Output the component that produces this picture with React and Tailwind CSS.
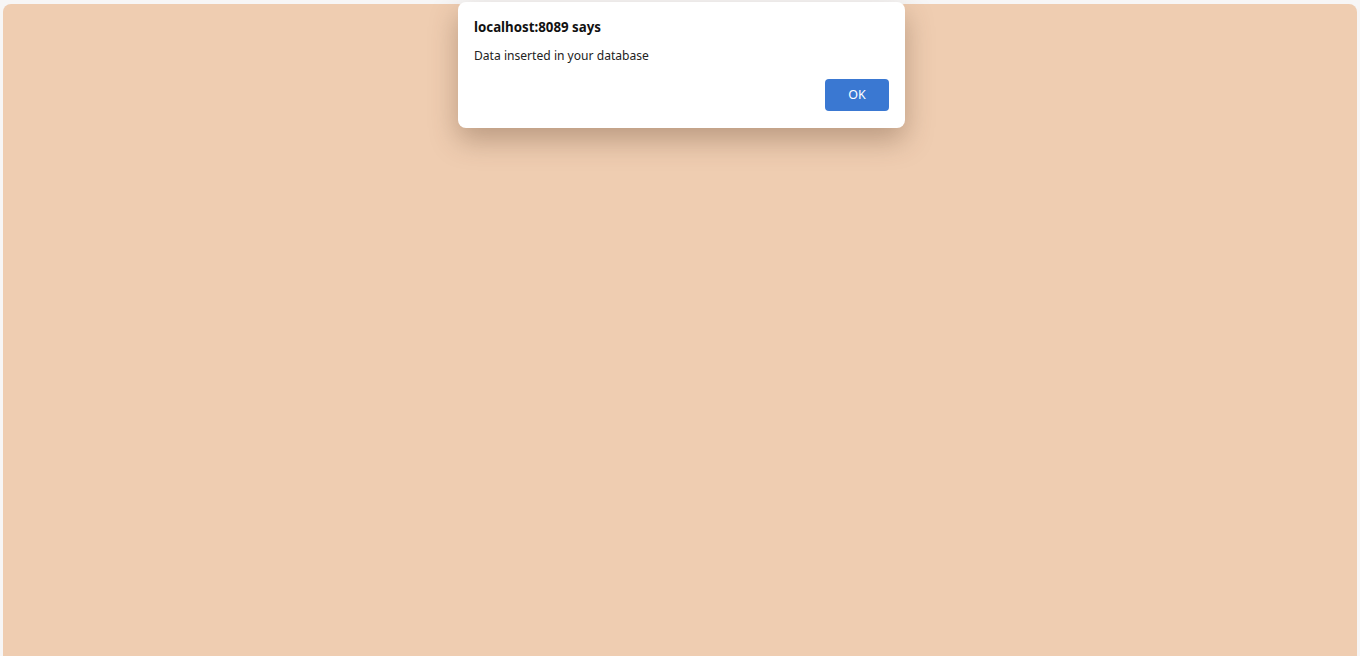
export default function App() {
  return (
    <div className="relative w-[1360px] h-[656px] overflow-hidden bg-[#f7f6f6] pt-[4px] px-[3px]" style={{ fontFamily: '"Noto Sans", "Open Sans", sans-serif' }}>
      <div className="h-[660px] w-full rounded-t-[8px] bg-[#efcdb1]" />
      <div className="absolute left-[458px] top-[2px] w-[447px] h-[126px] rounded-[8px] bg-white shadow-[0_12px_28px_rgba(90,60,40,0.35)] pt-[15px] px-[16px]">
        <div className="text-[13.3px] font-bold text-[#111] leading-[20px]">localhost:8089 says</div>
        <div className="mt-[10px] text-[12.1px] text-[#222] leading-[18px]">Data inserted in your database</div>
        <div className="flex justify-end mt-[14px]">
          <button className="w-[64px] h-[32px] rounded-[4px] bg-[#3a78d2] text-white text-[12.5px]">OK</button>
        </div>
      </div>
    </div>
  );
}
